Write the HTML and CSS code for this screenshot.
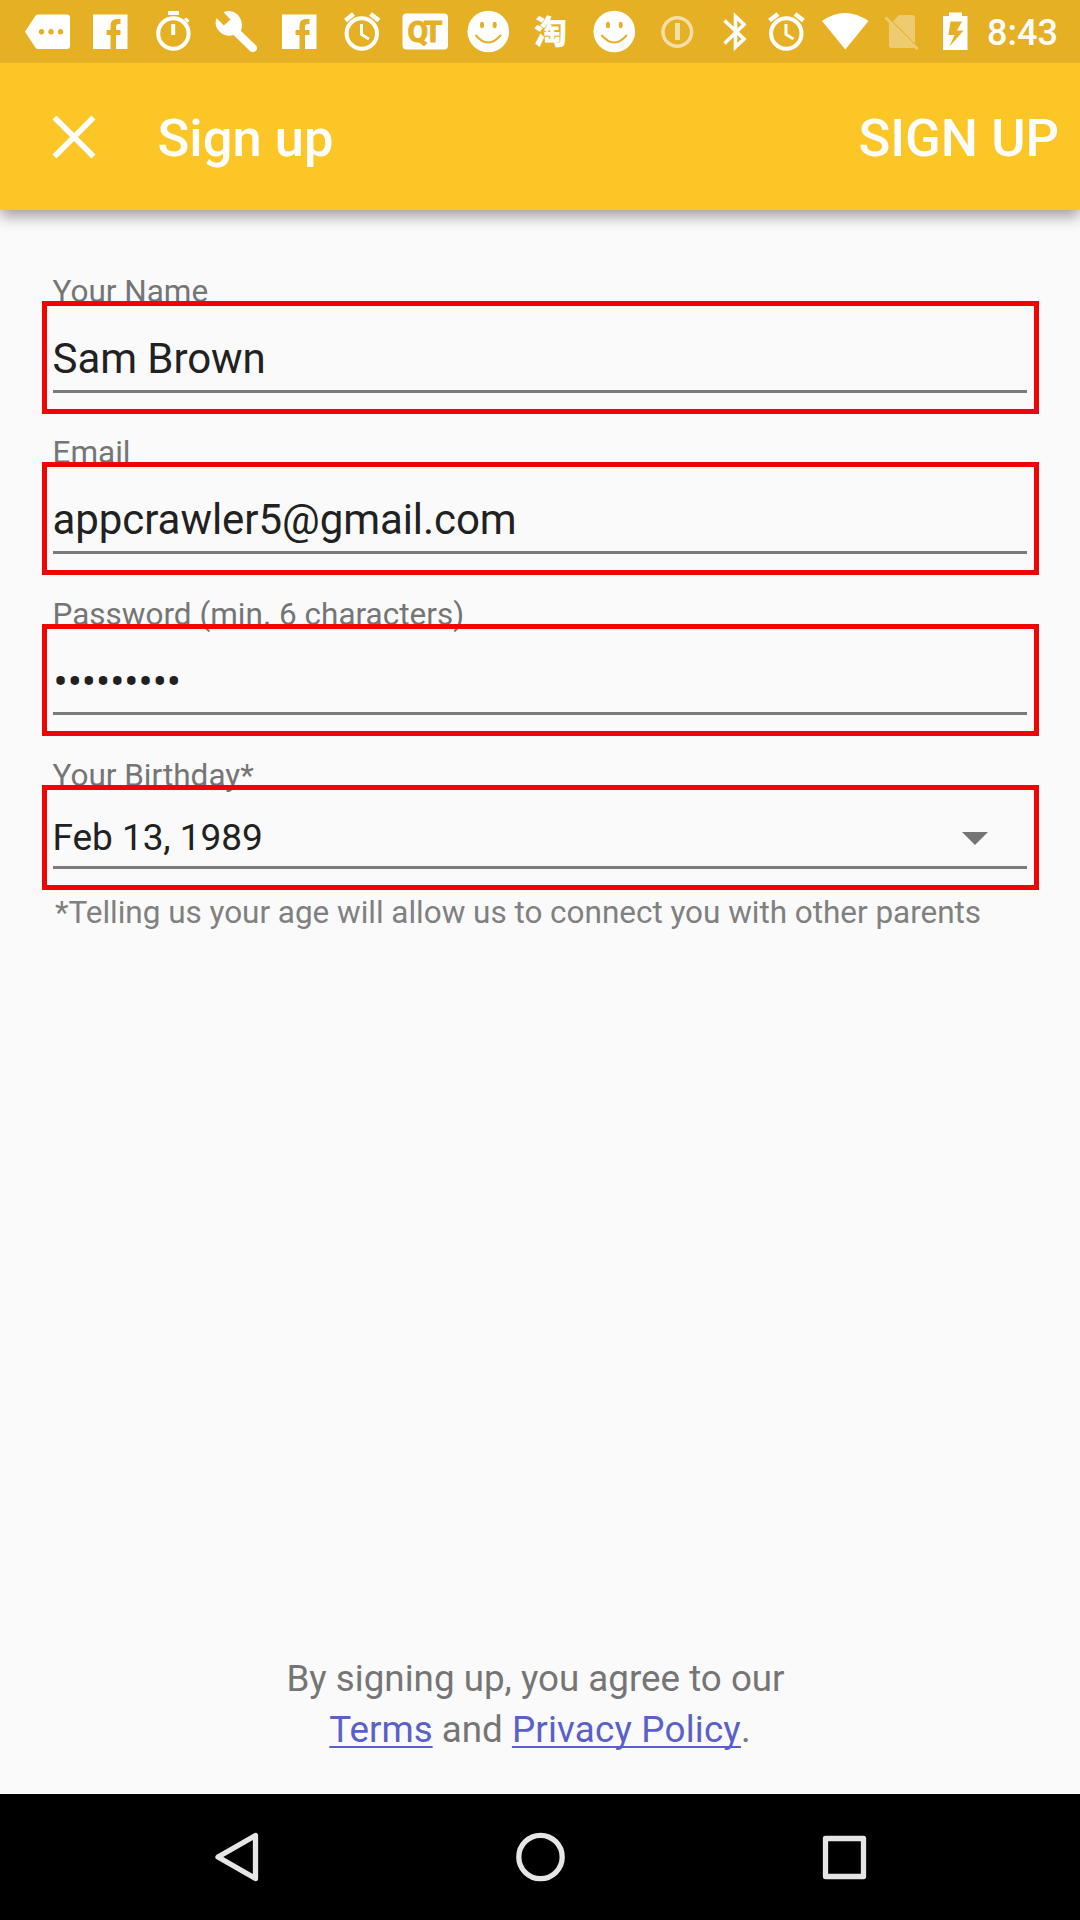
FILE: index.html
```html
<!DOCTYPE html>
<html lang="en">
<head>
<meta charset="utf-8">
<title>Sign up</title>
<link rel="stylesheet" href="styles.css">
</head>
<body>
<div class="screen">
  <div class="status-bar">
    <svg width="82" height="63" viewBox="0 0 82 63"><path fill-rule="evenodd" d="M38 14.500H67Q70 14.500 70 17.500V46Q70 49 67 49H38Q36 49 35 47L25 31.700L35 16.500Q36 14.500 38 14.500ZM41.500 29a2.800 2.800 0 1 0 .01 0ZM51 29a2.800 2.800 0 1 0 .01 0ZM60.500 29a2.800 2.800 0 1 0 .01 0Z"/></svg>
    <svg width="60" height="63" viewBox="82 0 60 63"><path d="M93 14.500H127.500V49H116V35H120.500V30H116V27Q116 24 119 24H120.500V19H117Q110.500 19 110.500 26V30H106.500V35H110.500V49H93Z"/></svg>
    <svg width="66" height="63" viewBox="142 0 66 63"><path d="M168 11H179V15H168ZM171.200 24H175.200V35H171.200ZM184 19L186.500 17.500L189.500 20.500L187.500 23Z"/><circle class="line" cx="173.400" cy="33.500" r="15.200" stroke-width="4"/></svg>
    <svg width="63" height="63" viewBox="208 0 63 63"><path d="M241 31L256 45.500Q258 48 256.300 50.300Q253.500 53.300 250.500 51.500L233.500 35Q226 37.500 220 32Q213.500 26 216.500 18L223.800 25.500L230.500 19.500L223.500 12.300Q231 9 237.500 14.500Q244 21.500 241 31Z"/></svg>
    <svg width="62" height="63" viewBox="271 0 62 63"><path d="M282 14.500H316.500V49H305V35H309.500V30H305V27Q305 24 308 24H309.500V19H306Q299.500 19 299.500 26V30H295.500V35H299.500V49H282Z"/></svg>
    <svg width="58" height="63" viewBox="333 0 58 63"><g class="line"><circle cx="361.800" cy="33.500" r="15.200" stroke-width="4"/><path d="M361.500 24V34.500L369 39" stroke-width="3"/><path d="M345.500 20.500L353.500 14M370.500 14L379 20.500" stroke-width="4.500"/></g></svg>
    <svg width="66" height="63" viewBox="391 0 66 63"><rect x="402.500" y="13.500" width="45.500" height="36" rx="4"/><text class="qt" x="407.500" y="42">QT</text></svg>
    <svg width="62" height="63" viewBox="457 0 62 63"><circle cx="488.300" cy="31.500" r="20.800"/><g class="face"><ellipse cx="482" cy="25" rx="2" ry="3.300"/><ellipse cx="494.700" cy="25" rx="2" ry="3.300"/><path d="M475.500 35Q488 50 501 35"/></g></svg>
    <svg width="64" height="63" viewBox="519 0 64 63"><text class="tao" x="534" y="44">淘</text></svg>
    <svg width="62" height="63" viewBox="583 0 62 63"><circle cx="614.300" cy="31.500" r="20.800"/><g class="face"><ellipse cx="608" cy="25" rx="2" ry="3.300"/><ellipse cx="620.700" cy="25" rx="2" ry="3.300"/><path d="M601.500 35Q614 50 627 35"/></g></svg>
    <svg width="65" height="63" viewBox="645 0 65 63" opacity=".6"><g class="line"><circle cx="677.300" cy="32" r="14.300" stroke-width="3.500"/><path d="M677.500 23V40" stroke-width="5"/></g></svg>
    <svg width="48" height="63" viewBox="710 0 48 63"><path class="line" d="M724.500 20.500L744 39L735.500 47V16.500L744 24.500L724.500 43.500" stroke-width="3.600"/></svg>
    <svg width="56" height="63" viewBox="758 0 56 63"><g class="line"><circle cx="786.300" cy="33.500" r="15.200" stroke-width="4"/><path d="M786 24V34.500L793.500 39" stroke-width="3"/><path d="M769.500 20.500L778 14M795 14L803.500 20.500" stroke-width="4.500"/></g></svg>
    <svg width="64" height="63" viewBox="814 0 64 63"><path d="M822 21Q845 5 868.500 21L845.300 49.500Z"/></svg>
    <svg width="56" height="63" viewBox="878 0 56 63" opacity=".35"><path d="M899 15H912Q915 15 915 18V43.500L893 21.500ZM884.500 18.500L886.500 16.500L918.500 48L916.500 50L914 47.500Q913 48 912 48H892Q889 48 889 45V23Z"/></svg>
    <svg width="46" height="63" viewBox="934 0 46 63"><path fill-rule="evenodd" d="M949 12.500H962V16H967.500V50H943V16H949ZM950.500 21.500L948.500 35H954.500L949.500 46.500L963.500 30.500H957L962 21.500Z"/></svg>
    <span class="clock">8:43</span>
  </div>

  <header class="app-bar">
    <svg class="close" width="44" height="44" viewBox="0 0 44 44"><path class="line" d="M2.500 2.500L41.500 41.500M41.500 2.500L2.500 41.500" stroke-width="5.600"/></svg>
    <h1 class="title">Sign up</h1>
    <span class="action">SIGN UP</span>
  </header>

  <main class="form">
    <div class="field">
      <div class="label">Your Name</div>
      <div class="box"><div class="value">Sam Brown</div></div>
    </div>
    <div class="field">
      <div class="label">Email</div>
      <div class="box"><div class="value">appcrawler5@gmail.com</div></div>
    </div>
    <div class="field field-spaced">
      <div class="label">Password (min. 6 characters)</div>
      <div class="box box-password"><div class="value">•••••••••</div></div>
    </div>
    <div class="field field-spaced">
      <div class="label">Your Birthday*</div>
      <div class="box box-date"><div class="value"><span>Feb 13, 1989</span><svg class="caret" width="26" height="13" viewBox="0 0 26 13"><path d="M0 0H26L13 13Z"/></svg></div></div>
    </div>
    <p class="helper">*Telling us your age will allow us to connect you with other parents</p>
  </main>

  <footer class="legal">
    <div class="legal-intro">By signing up, you agree to our</div>
    <div><a class="link">Terms</a> and <a class="link link-privacy">Privacy Policy</a>.</div>
  </footer>

  <nav class="nav-bar">
    <svg width="50" height="50" viewBox="0 0 50 50"><path d="M42.500 3.500V46.500L5 25Z"/></svg>
    <svg width="50" height="50" viewBox="0 0 50 50"><circle cx="24.500" cy="25" r="21.700"/></svg>
    <svg width="50" height="50" viewBox="0 0 50 50"><rect x="6.500" y="6.500" width="38" height="38"/></svg>
  </nav>
</div>
</body>
</html>
```
FILE: styles.css
```css
* { box-sizing: border-box; }

body {
  margin: 0;
  font-family: Roboto, "Noto Sans", sans-serif;
  color: #212121;
}

.screen {
  width: 1080px;
  height: 1920px;
  display: flex;
  flex-direction: column;
  background: #fafafa;
  overflow: hidden;
}

svg { display: block; flex: none; }
.line { fill: none; stroke: #fff; }

.status-bar {
  position: relative;
  z-index: 1;
  flex: none;
  height: 63px;
  display: flex;
  background: #e6b025;
  fill: #fff;
}

.qt {
  font: 700 30px Roboto, sans-serif;
  letter-spacing: -4px;
  fill: #e6b025;
  stroke: #e6b025;
}

.tao {
  font: 900 33px "Noto Sans CJK SC", sans-serif;
}

.face { fill: #e6b025; }
.face path { fill: none; stroke: #e6b025; stroke-width: 2; }

.clock {
  margin-left: 7px;
  font-size: 36px;
  font-weight: 500;
  line-height: 66px;
  color: #fff;
}

.app-bar {
  flex: none;
  height: 147px;
  display: flex;
  align-items: center;
  padding: 0 21px 0 51.5px;
  background: #fdc627;
  color: #fff;
  font-size: 52.5px;
  font-weight: 500;
  box-shadow: 0 6px 14px rgba(0, 0, 0, .38);
}

.title {
  margin: 3px 0 0 62px;
  font: inherit;
}

.action { margin: 3px 0 0 auto; }

.form {
  flex: 1;
  padding: 43px 41px 0 42px;
}

.label {
  height: 48px;
  padding: 23px 0 0 10.5px;
  font-size: 31.5px;
  line-height: 32px;
  color: #757575;
  white-space: nowrap;
}

.field-spaced .label { height: 49px; padding-top: 24px; }

.box {
  position: relative;
  height: 113px;
  border: 5px solid #f00505;
  padding: 0 7px 0 5.5px;
}

.value {
  height: 87px;
  padding-top: 28px;
  border-bottom: 3px solid #7b7b7b;
  font-size: 42px;
  line-height: 49px;
  letter-spacing: -.06px;
}

.box-password { height: 112px; }
.box-password .value { height: 86px; padding: 28px 0 0 1px; letter-spacing: 0; }

.box-date { height: 105px; }
.box-date .value {
  display: flex;
  justify-content: space-between;
  height: 79px;
  padding: 26px 39px 0 0;
  font-size: 37px;
  line-height: 44px;
}

.caret { margin-top: 16px; fill: #757575; }

.helper {
  margin: 4px 0 0 13px;
  font-size: 31.5px;
  line-height: 37px;
  letter-spacing: -.03px;
  color: #808080;
  white-space: nowrap;
}

.legal {
  flex: none;
  padding-bottom: 39px;
  text-align: center;
  font-size: 36.75px;
  line-height: 51px;
  color: #757575;
}

.legal-intro { padding-right: 9px; }

.link {
  color: #5960c8;
  text-decoration: underline;
  text-decoration-thickness: 2px;
  text-underline-offset: 4px;
  text-decoration-skip-ink: none;
}

.link-privacy { letter-spacing: .2px; }

.nav-bar {
  flex: none;
  height: 126px;
  display: flex;
  justify-content: space-between;
  align-items: center;
  padding: 0 211px 0 213px;
  background: #000;
}

.nav-bar svg {
  fill: none;
  stroke: #e6e6e6;
  stroke-width: 5.300;
  stroke-linejoin: round;
}
```
